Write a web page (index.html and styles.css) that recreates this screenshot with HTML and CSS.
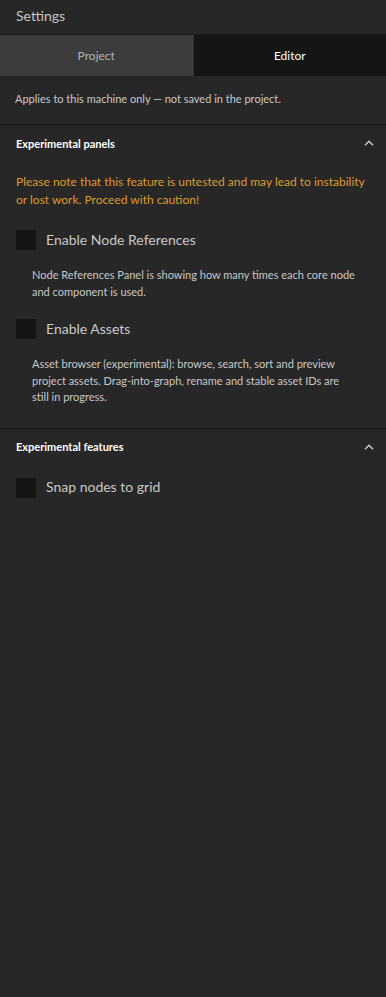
FILE: index.html
```html
<!DOCTYPE html>
<html lang="en">
<head>
    <meta charset="UTF-8">
    <meta name="viewport" content="width=device-width, initial-scale=1.0">
    <title>Settings</title>
    <link rel="stylesheet" href="styles.css">
</head>
<body>
    <div class="panel">
        <header class="panel-header">Settings</header>
        <div class="tabs">
            <div class="tab">Project</div>
            <div class="tab active">Editor</div>
        </div>
        <div class="intro">Applies to this machine only — not saved in the project.</div>

        <section class="section">
            <div class="section-title">
                <span>Experimental panels</span>
                <svg class="chevron" width="10" height="6" viewBox="0 0 10 6"><path d="M1 5.2 L5 1.2 L9 5.2" fill="none" stroke="#cfcfcf" stroke-width="1.4"/></svg>
            </div>
            <div class="section-body">
                <p class="warning">Please note that this feature is untested and may lead to instability or lost work. Proceed with caution!</p>
                <label class="check">
                    <span class="box"></span>
                    <span class="check-label">Enable Node References</span>
                </label>
                <p class="check-desc">Node References Panel is showing how many times each core node and component is used.</p>
                <label class="check">
                    <span class="box"></span>
                    <span class="check-label">Enable Assets</span>
                </label>
                <p class="check-desc">Asset browser (experimental): browse, search, sort and preview project assets. Drag-into-graph, rename and stable asset IDs are still&nbsp;in progress.</p>
            </div>
        </section>

        <section class="section">
            <div class="section-title">
                <span>Experimental features</span>
                <svg class="chevron" width="10" height="6" viewBox="0 0 10 6"><path d="M1 5.2 L5 1.2 L9 5.2" fill="none" stroke="#cfcfcf" stroke-width="1.4"/></svg>
            </div>
            <div class="section-body">
                <label class="check">
                    <span class="box"></span>
                    <span class="check-label">Snap nodes to grid</span>
                </label>
            </div>
        </section>
    </div>
</body>
</html>
```

FILE: styles.css
```css
*,*::before,*::after{
    padding: 0;
    margin: 0;
    box-sizing: border-box;
}
body{
    background-color: #272727;
    font-family: "Lato", "Noto Sans", sans-serif;
    color: #cfcfcf;
    min-height: 100vh;
}
.panel{
    width: 386px;
}
.panel-header{
    height: 35px;
    padding: 0 16px;
    line-height: 32px;
    font-size: 14px;
    color: #c4c4c4;
    border-bottom: 1px solid #1b1b1b;
}
.tabs{
    display: flex;
    height: 41px;
}
.tab{
    flex: 1;
    display: flex;
    align-items: center;
    justify-content: center;
    font-size: 12px;
    color: #aeb3bb;
    background-color: #3c3c3c;
    border-right: 1px solid #333;
}
.tab.active{
    background-color: #151515;
    color: #fff;
    border-right: none;
}
.intro{
    font-size: 11px;
    color: #c8c8c8;
    padding: 16px 15px 18px;
    line-height: 14px;
    border-bottom: 1px solid #161616;
}
.section{
    border-bottom: 1px solid #161616;
}
.section:last-child{
    border-bottom: none;
}
.section-title{
    display: flex;
    justify-content: space-between;
    align-items: center;
    height: 36px;
    padding: 0 12px 0 16px;
    font-size: 11px;
    font-weight: 700;
    color: #fff;
}
.section-body{
    padding: 12px 16px 3px;
}
.warning{
    font-size: 12px;
    line-height: 18px;
    color: #dd9a2b;
    margin-bottom: 21px;
}
.section-body > .check:first-child{
    margin-top: 1px;
}
.check{
    display: flex;
    align-items: center;
    gap: 10px;
    height: 20px;
}
.box{
    width: 20px;
    height: 20px;
    background-color: #151515;
}
.check-label{
    font-size: 14px;
    color: #c8c8c8;
    margin-top: -2px;
}
.check-desc{
    font-size: 11px;
    line-height: 16.5px;
    color: #c8c8c8;
    padding: 17px 14px 19px 16px;
}
```
